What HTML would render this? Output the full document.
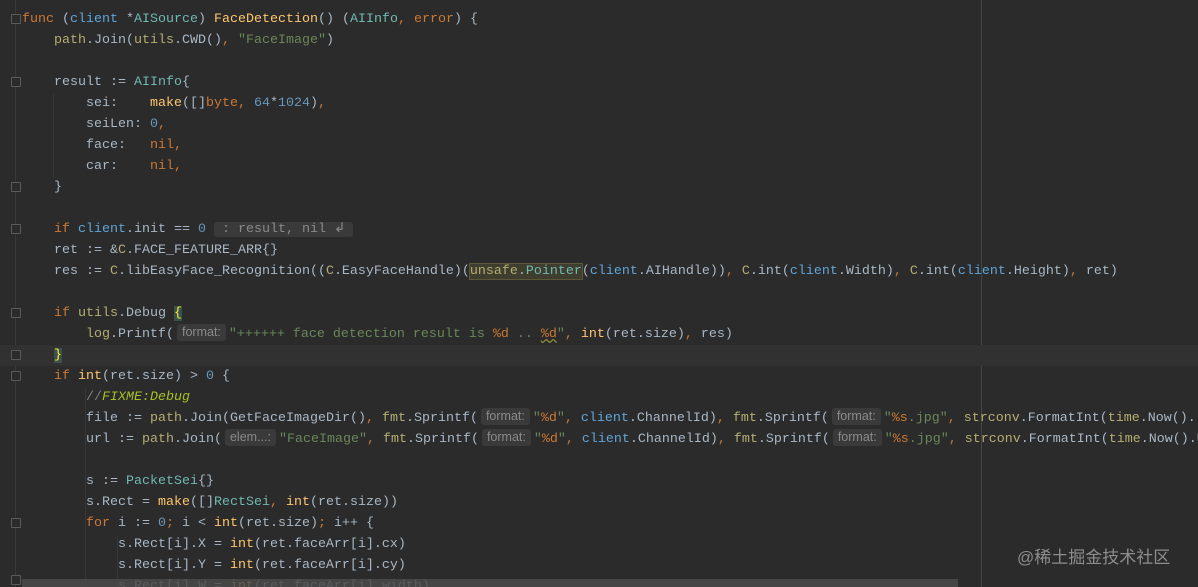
<!DOCTYPE html>
<html><head><meta charset="utf-8"><style>
html,body{margin:0;padding:0;background:#2b2b2b;width:1198px;height:587px;overflow:hidden;position:relative}
.l{position:absolute;left:22px;height:21px;line-height:21px;white-space:pre;font-family:"Liberation Mono",monospace;font-size:13.33px;color:#a9b7c6;margin-top:2px}
.k{color:#cc7832}.f{color:#ffc66d}.s{color:#6a8759}.n{color:#6897bb}.p{color:#5fa5d8}.t{color:#6fb8b0}.g{color:#b3ae72}.c{color:#808080}.fx{color:#a8c023;font-style:italic}
.h{display:inline-block;background:#3a3a3a;color:#8a8a8a;font-family:"Liberation Sans",sans-serif;font-size:12.5px;line-height:17px;padding:0 5px;border-radius:3px;margin:0 3px 0 3px;vertical-align:1px}
.hm{background:#3a3a3a;color:#8a8a8a;border-radius:3px}
.gut{position:absolute;left:15px;top:0;width:1px;height:587px;background:#393939}
.fold{position:absolute;left:11px;width:8px;height:8px;border:1px solid #5a5a5a;border-radius:1px;background:#2b2b2b}
.ig{position:absolute;width:1px;background:#363636}
</style></head><body>
<div class="gut"></div>
<div style="position:absolute;left:981px;top:0;width:1px;height:587px;background:#454545"></div>
<div style="position:absolute;left:0;top:345px;width:1198px;height:21px;background:#313131"></div>
<div class="ig" style="left:53px;top:94px;height:84px"></div>
<div class="ig" style="left:85px;top:388px;height:199px"></div>
<div class="ig" style="left:117px;top:535px;height:52px"></div>
<div class="fold" style="top:14px"></div>
<div class="fold" style="top:77px"></div>
<div class="fold" style="top:182px"></div>
<div class="fold" style="top:224px"></div>
<div class="fold" style="top:308px"></div>
<div class="fold" style="top:350px"></div>
<div class="fold" style="top:371px"></div>
<div class="fold" style="top:518px"></div>
<div class="fold" style="top:575px"></div>

<div class="l" style="top:7px"><span class="k">func</span> (<span class="p">client</span> *<span class="t">AISource</span>) <span class="f">FaceDetection</span>() (<span class="t">AIInfo</span><span class="k">,</span> <span class="k">error</span>) {</div>
<div class="l" style="top:28px">    <span class="g">path</span>.Join(<span class="g">utils</span>.CWD()<span class="k">,</span> <span class="s">"FaceImage"</span>)</div>
<div class="l" style="top:70px">    result := <span class="t">AIInfo</span>{</div>
<div class="l" style="top:91px">        sei:    <span class="f">make</span>([]<span class="k">byte</span><span class="k">,</span> <span class="n">64</span>*<span class="n">1024</span>)<span class="k">,</span></div>
<div class="l" style="top:112px">        seiLen: <span class="n">0</span><span class="k">,</span></div>
<div class="l" style="top:133px">        face:   <span class="k">nil,</span></div>
<div class="l" style="top:154px">        car:    <span class="k">nil,</span></div>
<div class="l" style="top:175px">    }</div>
<div class="l" style="top:217px">    <span class="k">if</span> <span class="p">client</span>.init == <span class="n">0</span> <span class="hm"> : result, nil ↲ </span></div>
<div class="l" style="top:238px">    ret := &amp;<span class="g">C</span>.FACE_FEATURE_ARR{}</div>
<div class="l" style="top:259px">    res := <span class="g">C</span>.libEasyFace_Recognition((<span class="g">C</span>.EasyFaceHandle)(<span style="background:#3e3d2e;outline:1px solid #5a5836"><span class="g">unsafe</span>.<span class="t">Pointer</span></span>(<span class="p">client</span>.AIHandle))<span class="k">,</span> <span class="g">C</span>.int(<span class="p">client</span>.Width)<span class="k">,</span> <span class="g">C</span>.int(<span class="p">client</span>.Height)<span class="k">,</span> ret)</div>
<div class="l" style="top:301px">    <span class="k">if</span> <span class="g">utils</span>.Debug <span style="background:#3b514d;color:#ffef28">{</span></div>
<div class="l" style="top:322px">        <span class="g">log</span>.Printf(<span class="h">format:</span><span class="s">"++++++ face detection result is <span class="k">%d</span> .. <span class="k" style="text-decoration:underline wavy #8a8a3a">%d</span>"</span><span class="k">,</span> <span class="f">int</span>(ret.size)<span class="k">,</span> res)</div>
<div class="l" style="top:343px">    <span style="background:#3b514d;color:#ffef28">}</span></div>
<div class="l" style="top:364px">    <span class="k">if</span> <span class="f">int</span>(ret.size) &gt; <span class="n">0</span> {</div>
<div class="l" style="top:385px">        <span class="c">//</span><span class="fx">FIXME:Debug</span></div>
<div class="l" style="top:406px">        file := <span class="g">path</span>.Join(GetFaceImageDir()<span class="k">,</span> <span class="g">fmt</span>.Sprintf(<span class="h">format:</span><span class="s">"<span class="k">%d</span>"</span><span class="k">,</span> <span class="p">client</span>.ChannelId)<span class="k">,</span> <span class="g">fmt</span>.Sprintf(<span class="h">format:</span><span class="s">"<span class="k">%s</span>.jpg"</span><span class="k">,</span> <span class="g">strconv</span>.FormatInt(<span class="g">time</span>.Now().</div>
<div class="l" style="top:427px">        url := <span class="g">path</span>.Join(<span class="h">elem...:</span><span class="s">"FaceImage"</span><span class="k">,</span> <span class="g">fmt</span>.Sprintf(<span class="h">format:</span><span class="s">"<span class="k">%d</span>"</span><span class="k">,</span> <span class="p">client</span>.ChannelId)<span class="k">,</span> <span class="g">fmt</span>.Sprintf(<span class="h">format:</span><span class="s">"<span class="k">%s</span>.jpg"</span><span class="k">,</span> <span class="g">strconv</span>.FormatInt(<span class="g">time</span>.Now().U</div>
<div class="l" style="top:469px">        s := <span class="t">PacketSei</span>{}</div>
<div class="l" style="top:490px">        s.Rect = <span class="f">make</span>([]<span class="t">RectSei</span><span class="k">,</span> <span class="f">int</span>(ret.size))</div>
<div class="l" style="top:511px">        <span class="k">for</span> i := <span class="n">0</span><span class="k">;</span> i &lt; <span class="f">int</span>(ret.size)<span class="k">;</span> i++ {</div>
<div class="l" style="top:532px">            s.Rect[i].X = <span class="f">int</span>(ret.faceArr[i].cx)</div>
<div class="l" style="top:553px">            s.Rect[i].Y = <span class="f">int</span>(ret.faceArr[i].cy)</div>
<div class="l" style="top:574px">            s.Rect[i].W = <span class="f">int</span>(ret.faceArr[i].width)</div>
<div style="position:absolute;left:22px;top:579px;width:936px;height:8px;background:#4a4a4a;opacity:.85"></div>
<div style="position:absolute;left:1017px;top:543px;font-family:'Liberation Sans','Noto Sans CJK SC',sans-serif;font-size:17px;color:#8d8d8d;white-space:nowrap">@稀土掘金技术社区</div>
</body></html>
